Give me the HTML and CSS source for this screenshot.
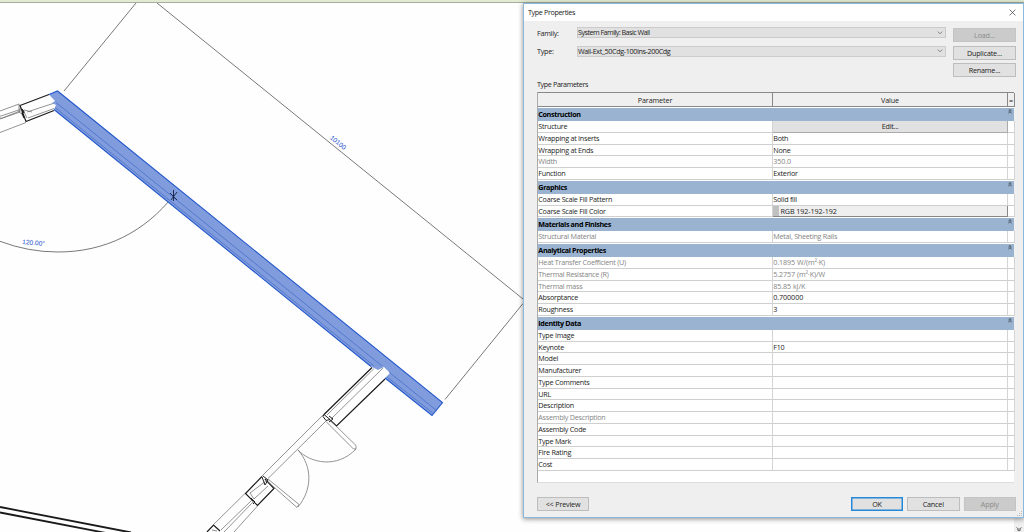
FILE: index.html
```
<!DOCTYPE html>
<html lang="en">
<head>
<meta charset="utf-8">
<title>Type Properties</title>
<link rel="stylesheet" href="styles.css">
</head>
<body>
<main class="workspace">
  <svg class="drawing" width="1024" height="532" viewBox="0 0 1024 532">
    <g class="thin">
      <path d="M136 3L64 91M157 3L523 299M523 303.500L445 399.500"/>
      <path d="M0 241.300Q28 252 58 252C105 252 145 232 174 195"/>
    </g>
    <!-- upper window -->
    <g class="mid">
      <path d="M0 111L19 104M0 132.500L26 122.500M1 116L20 109.500M1 118.500L20 111M0 115v4L20 112V108M27 112L56 102.500M28 118L54 108.500M24 110l8 2M19 104v8l4 3M24 112l3 6"/>
    </g>
    <path class="heavy" d="M49 94.500L20 105.500L26 121.500L54 110.500M22 109l2 3-2 1 2 5"/>
    <!-- selected wall -->
    <path class="wall" d="M49 94.500L57.500 91L442.500 402.500L432 415.500L385 378L390 373L384 367L378 370L371 366.500L54 109.500L56 105L52 103L55 101Z"/>
    <path class="edge" d="M49 94.500L57.500 91L442.500 402.500L432 415.500L385 378M371 366.500L54 109.500"/>
    <path class="core" d="M56 102.500L382 366M389 372L437 411M55 107.500L374 366M387 377L434 414"/>
    <path class="cursor" d="M173.500 190v11M170 193l7 7M177 192l-6 8"/>
    <!-- lower wall, windows and doors -->
    <path class="heavy" d="M372 367.500L324 414.500M385 379L336.500 426L330 420M262 476.500L245.500 493.500L257.500 505.500L274 488.500L265 479M207 532L213.500 525L220 531"/>
    <g class="mid">
      <path d="M374 368.500L327 415M383 368L331 419M324 414L262 476M326 421L268 478.500M329 419L356 445.500V449L353.500 449L326 421.500M298 450C310 463 337 469 356 449M298 450C313 467 312 490 298 507M268 479L299 504.500L297 507.500L266 480M245 493.500L212 526M257.500 506L234 532M254 501L224 532M252 500L221 530M266 481L250 493l4 6 14-13M212 530l5 1"/>
    </g>
    <path class="joint" d="M324 414.500l6 5-4 1-3-4zM329 416l4 3-4 3M263 476l5 4-3 5-3-8M251 498l4 4-2 2"/>
    <path class="beam" d="M0 507L131 532.500M0 512.500L106 533"/>
    <text class="dim" transform="translate(329.500 138.500) rotate(39)">10100</text>
    <text class="dim" transform="translate(22 244) rotate(5)">120.00°</text>
  </svg>
  <div class="ribbon"></div>
  <div class="scrollbar"><svg width="10" height="14" viewBox="0 0 10 14"><path d="M2.500 9.500l2.500 2 2.500-2M3 11.500l2 1.500 2-1.500"/></svg></div>

  <section class="dialog">
    <header class="titlebar"><span>Type Properties</span><svg width="7" height="7" viewBox="0 0 7 7"><path d="M.6.6l5.800 5.800M6.400.6L.6 6.400"/></svg></header>
    <div class="selectors">
      <div class="fields">
        <label>Family:</label><div class="select"><span class="tighter">System Family: Basic Wall</span><svg width="6" height="4" viewBox="0 0 6 4"><path d="M.8.6L3 2.800L5.200.6"/></svg></div>
        <label>Type:</label><div class="select"><span class="tight">Wall-Ext_50Cdg-100Ins-200Cdg</span><svg width="6" height="4" viewBox="0 0 6 4"><path d="M.8.6L3 2.800L5.200.6"/></svg></div>
      </div>
      <div class="actions">
        <button class="btn off">Load...</button>
        <button class="btn">Duplicate...</button>
        <button class="btn">Rename...</button>
      </div>
    </div>
    <div class="caption">Type Parameters</div>
    <div class="table">
      <div class="row head"><span>Parameter</span><span>Value</span><span>=</span></div>
      <div class="group"><b>Construction</b><svg width="4" height="5" viewBox="0 0 4 5"><path d="M.5 2L2 .6 3.500 2M.5 4L2 2.600 3.500 4"/></svg></div>
      <div class="row"><span>Structure</span><span class="edit">Edit...</span><span></span></div>
      <div class="row"><span>Wrapping at Inserts</span><span>Both</span><span></span></div>
      <div class="row"><span>Wrapping at Ends</span><span>None</span><span></span></div>
      <div class="row dimmed"><span>Width</span><span class="num">350.0</span><span></span></div>
      <div class="row"><span>Function</span><span>Exterior</span><span></span></div>
      <div class="group"><b>Graphics</b><svg width="4" height="5" viewBox="0 0 4 5"><path d="M.5 2L2 .6 3.500 2M.5 4L2 2.600 3.500 4"/></svg></div>
      <div class="row"><span>Coarse Scale Fill Pattern</span><span>Solid fill</span><span></span></div>
      <div class="row"><span>Coarse Scale Fill Color</span><span class="color num"><em></em>RGB 192-192-192</span><span></span></div>
      <div class="group"><b>Materials and Finishes</b><svg width="4" height="5" viewBox="0 0 4 5"><path d="M.5 2L2 .6 3.500 2M.5 4L2 2.600 3.500 4"/></svg></div>
      <div class="row dimmed"><span>Structural Material</span><span>Metal, Sheeting Rails</span><span></span></div>
      <div class="group"><b>Analytical Properties</b><svg width="4" height="5" viewBox="0 0 4 5"><path d="M.5 2L2 .6 3.500 2M.5 4L2 2.600 3.500 4"/></svg></div>
      <div class="row dimmed"><span>Heat Transfer Coefficient (U)</span><span class="num">0.1895 W/(m²·K)</span><span></span></div>
      <div class="row dimmed"><span>Thermal Resistance (R)</span><span class="num">5.2757 (m²·K)/W</span><span></span></div>
      <div class="row dimmed"><span>Thermal mass</span><span class="num">85.85 kJ/K</span><span></span></div>
      <div class="row"><span>Absorptance</span><span class="num">0.700000</span><span></span></div>
      <div class="row"><span>Roughness</span><span>3</span><span></span></div>
      <div class="group"><b>Identity Data</b><svg width="4" height="5" viewBox="0 0 4 5"><path d="M.5 2L2 .6 3.500 2M.5 4L2 2.600 3.500 4"/></svg></div>
      <div class="row"><span>Type Image</span><span></span><span></span></div>
      <div class="row"><span>Keynote</span><span>F10</span><span></span></div>
      <div class="row"><span>Model</span><span></span><span></span></div>
      <div class="row"><span>Manufacturer</span><span></span><span></span></div>
      <div class="row"><span>Type Comments</span><span></span><span></span></div>
      <div class="row"><span>URL</span><span></span><span></span></div>
      <div class="row"><span>Description</span><span></span><span></span></div>
      <div class="row dimmed"><span>Assembly Description</span><span></span><span></span></div>
      <div class="row"><span>Assembly Code</span><span></span><span></span></div>
      <div class="row"><span>Type Mark</span><span></span><span></span></div>
      <div class="row"><span>Fire Rating</span><span></span><span></span></div>
      <div class="row"><span>Cost</span><span></span><span></span></div>
    </div>
    <footer class="footer">
      <button class="btn preview">&lt;&lt; Preview</button>
      <button class="btn primary">OK</button>
      <button class="btn">Cancel</button>
      <button class="btn off">Apply</button>
    </footer>
    <svg class="grip" width="6" height="6" viewBox="0 0 6 6"><path d="M4 0h1v1H4zM2 2h1v1H2zM4 2h1v1H4zM0 4h1v1H0zM2 4h1v1H2zM4 4h1v1H4z"/></svg>
  </section>
</main>
</body>
</html>
```
FILE: styles.css
```
* { box-sizing: border-box; }
body { margin: 0; font: 7.200px/11px "Open Sans", "Noto Sans", sans-serif; letter-spacing: -.25px; color: #1c1c1c; }
.workspace { position: relative; width: 1024px; height: 532px; overflow: hidden; background: #fefefe; }
.drawing { position: absolute; left: 0; top: 0; fill: none; letter-spacing: 0; }
.drawing path { fill: none; }
.thin { stroke: #555; stroke-width: .8; }
.mid { stroke: #707070; stroke-width: .75; }
.heavy { stroke: #1a1a1a; stroke-width: 1.2; }
.joint { stroke: #222; stroke-width: 1; }
.beam { stroke: #1a1a1a; stroke-width: 1.8; }
.drawing .wall { fill: #809cdc; }
.edge { stroke: #2458cc; stroke-width: 1.1; }
.core { stroke: #4770cc; stroke-width: .8; }
.cursor { stroke: #13203f; stroke-width: .9; }
.dim { font: 6.600px "Liberation Sans", Arial, sans-serif; fill: #1a4dcb; }
.ribbon { position: absolute; left: 0; top: 0; width: 100%; height: 3px; background: #e2ebd2; border-bottom: 1px solid #a6aea0; }
.scrollbar { position: absolute; right: 0; bottom: 0; width: 10px; height: 14px; background: #efefef; }
.scrollbar path { fill: none; stroke: #555; stroke-width: .9; }

.dialog { position: absolute; left: 523px; top: 3px; width: 501px; height: 515px; display: flex; flex-direction: column; background: #efefef; border: 1px solid #8bb9dc; box-shadow: 0 1px 5px rgba(0,0,0,.45); }
.titlebar { display: flex; justify-content: space-between; height: 17px; padding: 3px 7px 0 4px; background: #fff; }
.titlebar svg { margin-top: 2px; }
.titlebar path { fill: none; stroke: #444; stroke-width: .75; }
.selectors { display: flex; justify-content: space-between; padding: 6px 7px 0 13px; height: 58px; }
.fields { display: grid; grid-template-columns: 40px 369px; grid-auto-rows: 11px; row-gap: 7.500px; align-content: start; }
.fields label { padding-top: .6px; }
.select { display: flex; align-items: center; justify-content: space-between; padding: 0 2px 0 0; background: #e1e1e1; border: 1px solid #cbcbcb; white-space: nowrap; line-height: 9px; }
.select .tight { letter-spacing: -.38px; }
.select .tighter { letter-spacing: -.53px; }
.select svg path { fill: none; stroke: #666; stroke-width: .75; }
.actions { display: grid; grid-auto-rows: 14px; row-gap: 3.700px; width: 63px; align-content: start; padding-top: 1px; }
.btn { display: block; margin: 0; padding: 0; width: 63px; height: 14px; font: inherit; letter-spacing: -.18px; line-height: 12px; color: #1c1c1c; text-align: center; background: #e1e1e1; border: 1px solid #bdbdbd; }
.btn.off { background: #cbcbcb; border-color: #c4c4c4; color: #8a8a8a; }
.caption { height: 13px; padding-left: 13px; line-height: 11px; letter-spacing: -.4px; }
.caption, .titlebar { letter-spacing: -.38px; }
.table { width: 477px; height: 391px; margin-left: 13px; background: #fff; border: 1px solid #aaa; border-width: 0 0 1px 1px; border-bottom-color: #ddd; }
.row { display: grid; grid-template-columns: 235px 235px 7px; height: 11.750px; line-height: 11.500px; }
.row span { padding-left: .3px; border-right: 1px solid #d4d4d4; border-bottom: 1px solid #cfcfcf; white-space: nowrap; overflow: hidden; }
.row .num { letter-spacing: -.1px; }
.row.head { height: 15px; text-align: center; line-height: 14px; letter-spacing: -.1px; background: #efefef; border-top: 1px solid #888; }
.row.head span { border-color: #888; padding: 0; }
.row.dimmed { color: #858585; }
.row .edit { background: #e1e1e1; border-color: #aaa; text-align: center; }
.row .color { display: flex; background: #efefef; border-color: #888; padding: 0; }
.color em { width: 6px; margin-right: 1.500px; background: #c0c0c0; }
.group { display: flex; justify-content: space-between; height: 14px; padding: 0 2px 0 .3px; border-top: 1px solid #fff; background: #99b3d1; color: #000; line-height: 13px; letter-spacing: -.36px; }
.group svg { margin-top: 1px; }
.group path { fill: none; stroke: #222; stroke-width: .75; }
.footer { display: flex; padding: 14px 7px 0 13px; }
.footer .btn { width: 52.500px; margin-left: 4px; }
.footer .preview { width: 52px; margin: 0 auto 0 0; }
.footer .primary { border: 1px solid #2688d8; width: 52px; box-shadow: inset 0 0 0 .5px #2688d8; }
.grip { position: absolute; right: 0; bottom: 0; fill: #b5b5b5; }
```
